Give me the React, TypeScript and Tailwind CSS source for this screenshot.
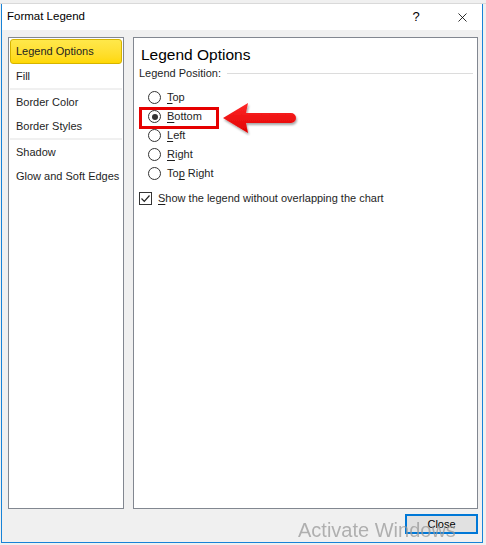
import { X as XIcon } from 'lucide-react';

const menu = [
  { label: 'Legend Options', active: true },
  { label: 'Fill' },
  { sep: true },
  { label: 'Border Color' },
  { label: 'Border Styles' },
  { sep: true },
  { label: 'Shadow' },
  { label: 'Glow and Soft Edges' },
];

const positions = [
  { label: 'Top', key: 'T', rest: 'op' },
  { label: 'Bottom', key: 'B', rest: 'ottom', checked: true },
  { label: 'Left', key: 'L', rest: 'eft' },
  { label: 'Right', key: 'R', rest: 'ight' },
  { label: 'Top Right', key: 'T', rest: 'o', underlineSecond: true },
];

function Radio({ checked }: { checked?: boolean }) {
  return (
    <span className="w-[13px] h-[13px] rounded-full border border-[#333] bg-white flex items-center justify-center shrink-0">
      {checked && <span className="w-[6px] h-[6px] rounded-full bg-[#333]" />}
    </span>
  );
}

function Arrow() {
  return (
    <svg width="80" height="34" viewBox="0 0 80 34" className="absolute left-[219px] top-[102px]">
      <defs>
        <linearGradient id="ar" x1="0" y1="0" x2="0" y2="1">
          <stop offset="0" stopColor="#ff2a2a" />
          <stop offset="1" stopColor="#e00000" />
        </linearGradient>
        <filter id="sh" x="-10%" y="-20%" width="130%" height="150%">
          <feDropShadow dx="1" dy="2" stdDeviation="1.2" floodColor="#000" floodOpacity="0.35" />
        </filter>
      </defs>
      <path
        d="M2 16 L27 1 L25 11 L70 11 A5 5 0 0 1 70 21 L25 21 L27 31 Z"
        fill="url(#ar)"
        filter="url(#sh)"
      />
    </svg>
  );
}

export default function App() {
  const font = { fontFamily: '"Segoe UI", "Liberation Sans", Arial, sans-serif' };
  return (
    <div className="w-[486px] h-[545px] bg-[#f0f0f0] overflow-hidden relative" style={font}>
      <div className="h-[4px] border-b border-[#d9d9d9]" />
      <div className="ml-[1px] w-[482px] h-[539px] border border-[#1883d7] border-t-0 flex flex-col">
        <div className="h-[26px] bg-white flex items-center pl-[5px] text-[11.5px] text-black">
          <span className="flex-1">Format Legend</span>
          <span className="w-[20px] text-center text-[13px] mr-[29px]">?</span>
          <XIcon className="w-[15px] h-[15px] mr-[12px]" strokeWidth={1.3} />
        </div>
        <div className="flex-1 relative flex flex-col pt-[7px] pl-[6px] pr-[4px]">
          <div className="flex gap-[9px] h-[472px]">
            <div className="w-[116px] h-full bg-white border border-[#828790] p-[1px] text-[11px] text-[#1e1e1e]">
              {menu.map((m, i) =>
                m.sep ? (
                  <div key={i} className="h-[2px] bg-[#f0f0f0]" />
                ) : m.active ? (
                  <div
                    key={i}
                    className="h-[25px] rounded-[3px] border border-[#d6b400] bg-gradient-to-b from-[#ffe84a] to-[#ffd800] flex items-center pl-[5px]"
                  >
                    {m.label}
                  </div>
                ) : (
                  <div key={i} className="h-[24px] flex items-center pl-[6px] pt-[1px] whitespace-nowrap">
                    {m.label}
                  </div>
                )
              )}
            </div>
            <div className="flex-1 h-full bg-white border border-[#828790] pl-[5px] pr-[4px] text-[11px] text-[#1e1e1e]">
              <div className="text-[15.5px] pl-[2px] pt-[6px] leading-[22px] text-black">Legend Options</div>
              <div className="flex items-center gap-[6px] h-[14px]">
                <span>Legend Position:</span>
                <span className="flex-1 h-px bg-[#dcdcdc]" />
              </div>
              <div className="flex flex-col mt-[8px] pl-[9px]">
                {positions.map((p) => (
                  <div key={p.label} className="h-[19px] flex items-center gap-[6px]">
                    <Radio checked={p.checked} />
                    <span>
                      {p.underlineSecond ? (
                        <>
                          To<span className="underline underline-offset-2">p</span> Right
                        </>
                      ) : (
                        <>
                          <span className="underline underline-offset-2">{p.key}</span>
                          {p.rest}
                        </>
                      )}
                    </span>
                  </div>
                ))}
              </div>
              <div className="flex items-center gap-[6px] mt-[7px]">
                <span className="w-[13px] h-[13px] border border-[#333] bg-white flex items-center justify-center">
                  <svg width="11" height="11" viewBox="0 0 11 11">
                    <path d="M1.5 5.5 L4.3 8.3 L9.5 2.5" fill="none" stroke="#222" strokeWidth="1.2" />
                  </svg>
                </span>
                <span>
                  <span className="underline underline-offset-2">S</span>how the legend without overlapping the chart
                </span>
              </div>
            </div>
          </div>
          <div className="flex justify-end mt-[5px]">
            <button className="w-[73px] h-[20px] bg-[#e1e1e1] border-2 border-[#0078d7] text-[11px] text-black leading-none">
              Close
            </button>
          </div>
          <div className="absolute left-[296px] top-[488px] text-[20px] leading-[24px] text-[#9a9a9a] opacity-75 pointer-events-none whitespace-nowrap">
            Activate Windows
          </div>
          <div className="absolute left-[137px] top-[77px] w-[80px] h-[22px] border-[3px] border-[#e60000] pointer-events-none" />
          <div className="absolute left-0 top-[-30px] w-0 h-0 pointer-events-none">
            <Arrow />
          </div>
        </div>
      </div>
    </div>
  );
}
